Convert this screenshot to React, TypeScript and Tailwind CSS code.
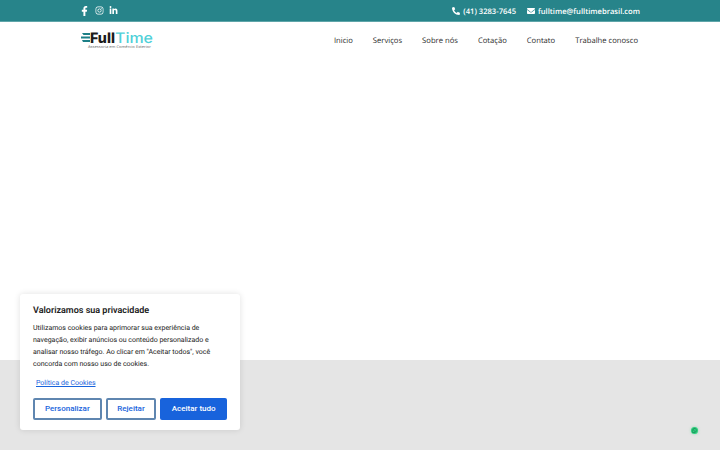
import { FaEnvelope, FaFacebookF, FaInstagram, FaLinkedinIn, FaPhoneAlt, FaWhatsapp } from 'react-icons/fa';

const navLinks = ['Inicio', 'Serviços', 'Sobre nós', 'Cotação', 'Contato', 'Trabalhe conosco'];

// logo is a drawing in the picture, so inline svg
const Logo = () => (
    <svg width="73" height="18" viewBox="0 0 73 18" className="-mt-[1px]">
        <path d="M1 2h8v2H2.500zM0 5.500h9v2H0zM1 9h8v2H2z" fill="#1d7f86" />
        <text x="9" y="12" textLength="25" lengthAdjust="spacingAndGlyphs" fontFamily="Inter, sans-serif" fontWeight="800" fontSize="14.500" fill="#1c1c1c">Full</text>
        <text x="34" y="12" textLength="38" lengthAdjust="spacingAndGlyphs" fontFamily="Inter, sans-serif" fontWeight="500" fontSize="14.500" fill="#4fd0d8">Time</text>
        <text x="7" y="16.500" textLength="63" lengthAdjust="spacingAndGlyphs" fontFamily="Open Sans, sans-serif" fontSize="3.800" fill="#666">Assessoria em Comércio Exterior</text>
    </svg>
);

const CookieCard = () => (
    <div className="absolute left-[20px] top-[294px] w-[220px] h-[136px] bg-white rounded-[3px] shadow-[0_0_6px_rgba(0,0,0,0.12)] px-[13px] pt-[11px] font-['Roboto',sans-serif] [text-rendering:geometricPrecision]">
        <h2 className="text-[9px] leading-[12px] font-semibold text-[#212121]">Valorizamos sua privacidade</h2>
        <p className="mt-[5px] text-[7px] leading-[12px] text-[#212121]">
            Utilizamos cookies para aprimorar sua experiência de navegação, exibir anúncios ou conteúdo personalizado e analisar nosso tráfego. Ao clicar em "Aceitar todos", você concorda com nosso uso de cookies.
        </p>
        <a className="block mt-[7px] ml-[3px] text-[7px] leading-[12px] text-[#1863dc] underline">Política de Cookies</a>
        <div className="mt-[9px] flex gap-[4px] text-[8px] font-medium">
            <button className="w-[69px] h-[22px] rounded-[2px] border-2 border-[#5f86b0] bg-white text-[#1863dc]">Personalizar</button>
            <button className="w-[51px] h-[22px] rounded-[2px] border-2 border-[#5f86b0] bg-white text-[#1863dc]">Rejeitar</button>
            <button className="w-[67px] h-[22px] rounded-[2px] bg-[#1863dc] text-white">Aceitar tudo</button>
        </div>
    </div>
);

const App = () => {
    return (
        <div className="relative w-[720px] h-[450px] overflow-hidden bg-white font-['Open_Sans',sans-serif] [text-rendering:geometricPrecision]">
            <div className="h-[22px] bg-[#27848a] border-b border-[#5fa5a9] text-white">
                <div className="flex items-center justify-between h-full pl-[81px] pr-[80px]">
                    <div className="flex items-center">
                        <FaFacebookF className="w-[7px] h-[10px]" />
                        <FaInstagram className="w-[9px] h-[9px] ml-[7px]" />
                        <FaLinkedinIn className="w-[9px] h-[9px] ml-[5px]" />
                    </div>
                    <div className="flex items-center mt-[2px] text-[7.600px] font-semibold">
                        <FaPhoneAlt className="w-[8px] h-[8px] mr-[3px]" />
                        <span className="pt-[2px]">(41) 3283-7645</span>
                        <FaEnvelope className="w-[8px] h-[8px] ml-[11px] mr-[3px]" />
                        <span className="pt-[2px]">fulltime@fulltimebrasil.com</span>
                    </div>
                </div>
            </div>
            <header className="h-[36px] flex items-center justify-between pl-[81px] pr-[82px]">
                <Logo />
                <nav className="flex gap-[20px] pt-[4px] text-[7.650px] text-[#2b2b2b]">
                    {navLinks.map((link) => (
                        <a key={link}>{link}</a>
                    ))}
                </nav>
            </header>
            <main className="h-[302px]" />
            <section className="h-[90px] bg-[#e5e5e5]" />
            <CookieCard />
            <div className="absolute left-[691px] top-[427px] w-[7px] h-[7px] rounded-full bg-[#2ecf7e] flex items-center justify-center shadow-[0_0_3px_rgba(37,194,110,0.4)]">
                <FaWhatsapp className="w-[5px] h-[5px] text-[#0d6b42]" />
            </div>
        </div>
    );
};

export default App;
